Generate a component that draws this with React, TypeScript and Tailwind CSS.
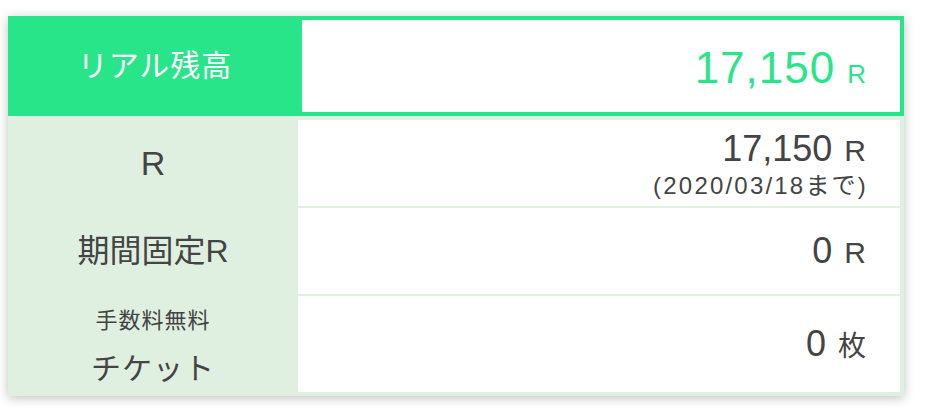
import React from "react";

const font = { fontFamily: '"Liberation Sans", "Noto Sans CJK JP", sans-serif' };

export default function App() {
  return (
    <div className="w-[930px] h-[416px] bg-white pt-4 pl-2" style={font}>
      <div className="w-[896px] shadow-[0_2px_10px_rgba(0,0,0,0.25)]">
        {/* header */}
        <div className="flex h-[100px]">
          <div className="w-[290px] bg-[#29e589] flex items-center justify-center text-white text-[30px] leading-none tracking-[1px] pl-[4px]">
            リアル残高
          </div>
          <div className="flex-1 bg-white border-4 border-[#29e589] flex items-center justify-end pr-[34px] text-[#29e589]">
            <div className="flex items-baseline leading-none mt-[4px]">
              <span className="text-[44px] tracking-[1px]">17,150</span>
              <span className="text-[26px] ml-[12px]">R</span>
            </div>
          </div>
        </div>
        {/* body */}
        <div className="bg-[#dff0e0] flex flex-col gap-[2px] py-1 text-[#444]">
          <div className="flex h-[86px]">
            <div className="w-[290px] flex items-center justify-center text-[34px] leading-none">R</div>
            <div className="flex-1 bg-white mr-1 flex flex-col items-end justify-center pr-[34px]">
              <div className="flex items-baseline leading-none mt-[2px]">
                <span className="text-[36px]">17,150</span>
                <span className="text-[30px] ml-[12px]">R</span>
              </div>
              <div className="text-[24px] leading-none mt-[7px] tracking-[2.2px] -mr-[2px]">(2020/03/18まで)</div>
            </div>
          </div>
          <div className="flex h-[86px]">
            <div className="w-[290px] flex items-center justify-center text-[32px] leading-none">期間固定R</div>
            <div className="flex-1 bg-white mr-1 flex items-center justify-end pr-[34px]">
              <div className="flex items-baseline leading-none">
                <span className="text-[36px]">0</span>
                <span className="text-[30px] ml-[12px]">R</span>
              </div>
            </div>
          </div>
          <div className="flex h-[96px]">
            <div className="w-[290px] flex flex-col items-center justify-center pt-[6px]">
              <div className="text-[22px] leading-none tracking-[1px]">手数料無料</div>
              <div className="text-[30px] leading-none mt-[22px] tracking-[1px]">チケット</div>
            </div>
            <div className="flex-1 bg-white mr-1 flex items-center justify-end pr-[34px]">
              <div className="flex items-baseline leading-none">
                <span className="text-[36px]">0</span>
                <span className="text-[28px] ml-[12px]">枚</span>
              </div>
            </div>
          </div>
        </div>
      </div>
    </div>
  );
}
